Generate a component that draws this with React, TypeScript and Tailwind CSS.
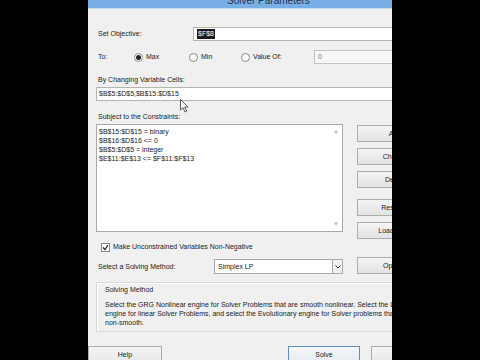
const font = { fontFamily: '"Liberation Sans", Arial, sans-serif' };

function Radio({ label, checked }: { label: string; checked?: boolean }) {
  return (
    <div className="flex items-center gap-[3px]">
      <span className="flex h-[9px] w-[9px] items-center justify-center rounded-full border border-[#8a8a8a] bg-white">
        {checked ? <span className="h-[5px] w-[5px] rounded-full bg-[#222]" /> : null}
      </span>
      <span>{label}</span>
    </div>
  );
}

function SideButton({ label, className = "" }: { label: string; className?: string }) {
  return (
    <div
      className={`flex h-[17px] w-[76px] items-center justify-center border border-[#adadad] bg-gradient-to-b from-[#f4f4f4] to-[#e3e3e3] ${className}`}
    >
      {label}
    </div>
  );
}

function Cursor() {
  return (
    <svg className="absolute left-[83px] top-[11px]" width="9" height="14" viewBox="0 0 9 14">
      <path d="M0.5 0.5 L0.5 11 L3 8.6 L5 13 L6.6 12.3 L4.7 8 L8 8 Z" fill="#fff" stroke="#333" strokeWidth="0.8" />
    </svg>
  );
}

export default function App() {
  return (
    <div className="flex h-[360px] w-[480px] overflow-hidden bg-black text-[7px] leading-[10px] text-[#222]" style={font}>
      <div className="w-[88px] shrink-0" />
      <div className="flex h-full w-[304px] shrink-0 flex-col overflow-hidden bg-[#f0f0f0]">
        {/* title bar */}
        <div className="h-[8px] shrink-0 overflow-hidden bg-[#79afe8]">
          <div className="-mt-[5px] pl-[139px] text-[10px] leading-[12px] text-[#1d3550]">Solver Parameters</div>
        </div>
        <div className="h-px shrink-0 bg-[#c9dcf0]" />

        <div className="w-[360px] shrink-0">
          {/* Set objective */}
          <div className="mt-[18px] flex h-[14px] items-center">
            <div className="w-[105px] pl-[10px]">Set Objective:</div>
            <div className="flex h-[14px] flex-1 items-center border border-[#b4b4b4] bg-white pl-[3px]">
              <span className="bg-[#1b1b1b] px-px text-white">$F$8</span>
            </div>
          </div>

          {/* To */}
          <div className="mt-[9px] flex h-[14px] items-center">
            <div className="w-[46px] pl-[10px]">To:</div>
            <div className="w-[55px]">
              <Radio label="Max" checked />
            </div>
            <div className="w-[52px]">
              <Radio label="Min" />
            </div>
            <div className="w-[73px]">
              <Radio label="Value Of:" />
            </div>
            <div className="flex h-[14px] flex-1 items-center border border-[#c4c4c4] bg-[#f7f7f7] pl-[3px] text-[#777]">0</div>
          </div>

          {/* changing cells */}
          <div className="mt-[10px] pl-[10px] leading-[12px]">By Changing Variable Cells:</div>
          <div className="relative ml-[8px] mt-px flex h-[14px] items-center border border-[#b4b4b4] bg-white pl-[2px]">
            $B$5:$D$5,$B$15:$D$15
            <Cursor />
          </div>

          <div className="mt-[10px] pl-[10px] leading-[12px]">Subject to the Constraints:</div>

          {/* constraints + side buttons */}
          <div className="mt-px flex">
            <div className="ml-[8px] w-[247px]">
              <div className="relative h-[108px] border border-[#a9a9a9] bg-white pl-[2px] pt-[2px] leading-[9px]">
                <div>$B$15:$D$15 = binary</div>
                <div>$B$16:$D$16 &lt;= 0</div>
                <div>$B$5:$D$5 = integer</div>
                <div>$E$11:$E$13 &lt;= $F$11:$F$13</div>
                <span className="absolute right-[3px] top-[2px] text-[6px] text-[#bbb]">▲</span>
                <span className="absolute bottom-[2px] right-[3px] text-[6px] text-[#bbb]">▼</span>
              </div>
              <div className="mt-[10px] flex h-[10px] items-center gap-[3px] pl-[5px]">
                <span className="flex h-[9px] w-[9px] items-center justify-center border border-[#8a8a8a] bg-white">
                  <svg width="7" height="7" viewBox="0 0 7 7">
                    <path d="M1 3.5 L3 5.5 L6 1" fill="none" stroke="#222" strokeWidth="1.2" />
                  </svg>
                </span>
                <span>Make Unconstrained Variables Non-Negative</span>
              </div>
              <div className="mt-[7px] flex h-[15px] items-center">
                <div className="w-[118px] pl-[2px]">Select a Solving Method:</div>
                <div className="flex h-[15px] flex-1 items-center border border-[#a9a9a9] bg-white pl-[3px]">
                  <span className="flex-1">Simplex LP</span>
                  <span className="flex h-[13px] w-[10px] items-center justify-center border-l border-[#a9a9a9] bg-[#f0f0f0]">
                    <svg width="6" height="4" viewBox="0 0 6 4">
                      <path d="M0.5 0.5 L3 3 L5.5 0.5" fill="none" stroke="#333" strokeWidth="1" />
                    </svg>
                  </span>
                </div>
              </div>
            </div>
            <div className="ml-[14px] flex flex-col pt-px">
              <SideButton label="Add" />
              <SideButton label="Change" className="mt-[6px]" />
              <SideButton label="Delete" className="mt-[6px]" />
              <SideButton label="Reset All" className="mt-[11px]" />
              <SideButton label="Load/Save" className="mt-[6px]" />
              <SideButton label="Options" className="mt-[18px]" />
            </div>
          </div>

          {/* solving method group */}
          <div className="ml-[8px] mt-[8px] h-[50px] border border-[#dadada] pl-[8px] pt-[2px] shadow-[inset_1px_1px_0_#fff]">
            <div className="leading-[10px]">Solving Method</div>
            <div className="mt-[5px] whitespace-nowrap leading-[9px]">
              Select the GRG Nonlinear engine for Solver Problems that are smooth nonlinear. Select the LP Simplex
              <br />
              engine for linear Solver Problems, and select the Evolutionary engine for Solver problems that are
              <br />
              non-smooth.
            </div>
          </div>

          {/* bottom buttons */}
          <div className="mt-[14px] flex">
            <div className="flex h-[22px] w-[74px] items-start justify-center border border-[#adadad] bg-gradient-to-b from-[#f4f4f4] to-[#e6e6e6] pt-[3px]">
              Help
            </div>
            <div className="ml-[126px] flex h-[22px] w-[72px] items-start justify-center border border-[#5a8fc4] bg-gradient-to-b from-[#f4f7fa] to-[#e4e9ee] pt-[3px]">
              Solve
            </div>
            <div className="ml-[11px] flex h-[22px] w-[72px] items-start justify-center border border-[#adadad] bg-gradient-to-b from-[#f4f4f4] to-[#e6e6e6] pt-[3px]">
              Close
            </div>
          </div>
        </div>
      </div>
    </div>
  );
}
